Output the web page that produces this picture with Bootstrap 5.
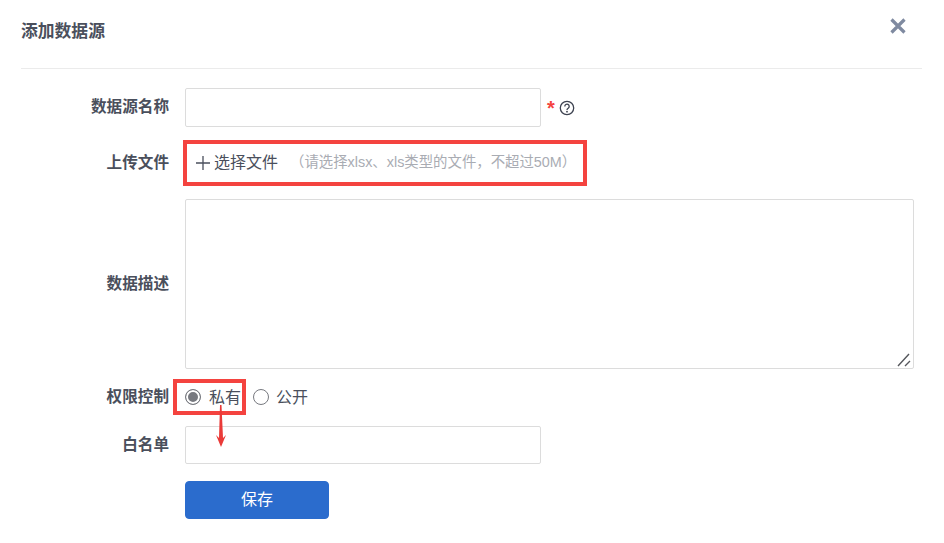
<!DOCTYPE html>
<html lang="zh-CN">
<head>
  <meta charset="UTF-8" />
  <meta name="viewport" content="width=device-width, initial-scale=1.0" />
  <title>添加数据源</title>
  <link href="https://cdn.jsdelivr.net/npm/bootstrap@5.3.0/dist/css/bootstrap.min.css" rel="stylesheet">
  <style>
    body {
      background: #fff;
      font-family: "Liberation Sans", "Noto Sans CJK SC", sans-serif;
      color: #4a4f5c;
      overflow: hidden;
    }
    .ds-panel { width: 944px; height: 543px; padding: 0 22px 0 21px; }
    .ds-head { height: 69px; border-bottom: 1px solid #ebebeb; padding-bottom: 4px; }
    .ds-title { font-size: 16.800px; font-weight: 700; color: #4a4f5c; margin: 0; }
    .ds-close { width: 20px; height: 20px; margin: 0 14px 12px 0; }
    .ds-body { padding-top: 19px; }
    .ds-label { width: 148px; margin: 0 16px 0 0; padding-bottom: 1px; text-align: right; font-size: 15.600px; font-weight: 700; color: #4a4f5c; flex-shrink: 0; }
    .ds-input { width: 356px; height: 39px; border: 1px solid #dcdcdc; border-radius: 2px; box-shadow: none; }
    .ds-input.short { height: 38px; }
    .ds-upload { width: 404px; height: 46px; margin-left: -2px; border: 4px solid #f4433f; padding-left: 9px; }
    .ds-pick { font-size: 16px; color: #4a4f5c; padding-bottom: 1px; }
    .ds-tip { font-size: 14.400px; color: #a9acb3; margin-left: 12px; padding-bottom: 1px; }
    .ds-textwrap { position: relative; width: 729px; height: 170px; }
    .ds-text { height: 170px; border: 1px solid #dcdcdc; border-radius: 2px; resize: none; }
    .ds-grip { position: absolute; right: 2px; bottom: 0; width: 16px; height: 16px; }
    .ds-radios { height: 36px; font-size: 16px; }
    .ds-mark { width: 73px; height: 36px; margin-left: -12px; border: 4px solid #f4433f; padding-left: 8px; }
    .ds-radio { width: 16px; height: 16px; border: 1.500px solid #77797f; border-radius: 50%; flex-shrink: 0; background: #fff; }
    .ds-radio.on { background: #77797f; box-shadow: inset 0 0 0 2px #fff; }
    .ds-radiotext { padding-top: 2px; }
    .ds-arrow { position: absolute; left: 215px; top: 405px; width: 12px; height: 42px; }
    .ds-save { width: 144px; height: 38px; background: #2b6ccd; border-color: #2b6ccd; color: #fff; font-size: 16px; font-weight: 400; border-radius: 4px; padding: 0 0 1px; }
    .ds-star { color: #f4433f; font-size: 20px; font-weight: 700; line-height: 1; }
  </style>
</head>
<body>
<div class="ds-panel position-relative">
  <div class="ds-head d-flex align-items-center justify-content-between">
    <h5 class="ds-title">添加数据源</h5>
    <svg class="ds-close" viewBox="0 0 20 20"><path d="M3.500 3.500 16.500 16.500M16.500 3.500 3.500 16.500" stroke="#7f8aa0" stroke-width="3.200" fill="none"/></svg>
  </div>
  <form class="ds-body">
    <div class="d-flex align-items-center">
      <label class="ds-label">数据源名称</label>
      <input type="text" class="form-control ds-input">
      <span class="d-flex align-items-center" style="margin-left:6px">
        <span class="ds-star">*</span>
        <svg width="16" height="16" viewBox="0 0 16 16" style="margin-left:4px"><circle cx="8" cy="8" r="6.700" fill="none" stroke="#3d4250" stroke-width="1.300"/><path d="M5.800 6.400a2.200 2.200 0 1 1 3.400 1.800c-.8.500-1.200.9-1.200 1.700" fill="none" stroke="#3d4250" stroke-width="1.300"/><circle cx="8" cy="11.700" r=".9" fill="#3d4250"/></svg>
      </span>
    </div>
    <div class="d-flex align-items-center" style="margin-top:13px">
      <label class="ds-label">上传文件</label>
      <div class="ds-upload d-flex align-items-center">
        <svg width="14" height="14" viewBox="0 0 14 14"><path d="M7 0v14M0 7h14" stroke="#4a4f5c" stroke-width="1.300"/></svg>
        <span class="ds-pick ms-1">选择文件</span>
        <span class="ds-tip">（请选择xlsx、xls类型的文件，不超过50M）</span>
      </div>
    </div>
    <div class="d-flex align-items-center" style="margin-top:13px">
      <label class="ds-label">数据描述</label>
      <div class="ds-textwrap">
        <textarea class="form-control ds-text"></textarea>
        <svg class="ds-grip" viewBox="0 0 16 16"><path d="M13 1 2 13M14 8 9 13" stroke="#55575c" stroke-width="1.400" fill="none"/></svg>
      </div>
    </div>
    <div class="d-flex align-items-center" style="margin-top:10px">
      <label class="ds-label">权限控制</label>
      <div class="ds-radios d-flex align-items-center">
        <div class="ds-mark d-flex align-items-center gap-2"><span class="ds-radio on"></span><span class="ds-radiotext">私有</span></div>
        <span class="ds-radio" style="margin-left:7px"></span><span class="ds-radiotext" style="margin-left:7px">公开</span>
      </div>
    </div>
    <div class="d-flex align-items-center" style="margin-top:11px">
      <label class="ds-label">白名单</label>
      <input type="text" class="form-control ds-input short">
    </div>
    <div class="d-flex" style="margin-top:17px;padding-left:164px">
      <button type="button" class="btn ds-save">保存</button>
    </div>
  </form>
  <svg class="ds-arrow" viewBox="0 0 12 42"><path d="M5 0 6.500 0 8 33 11 30 6 42 1 30 4 33Z" fill="#ea3a38"/></svg>
</div>
<script src="https://cdn.jsdelivr.net/npm/bootstrap@5.3.0/dist/js/bootstrap.bundle.min.js"></script>
</body>
</html>
